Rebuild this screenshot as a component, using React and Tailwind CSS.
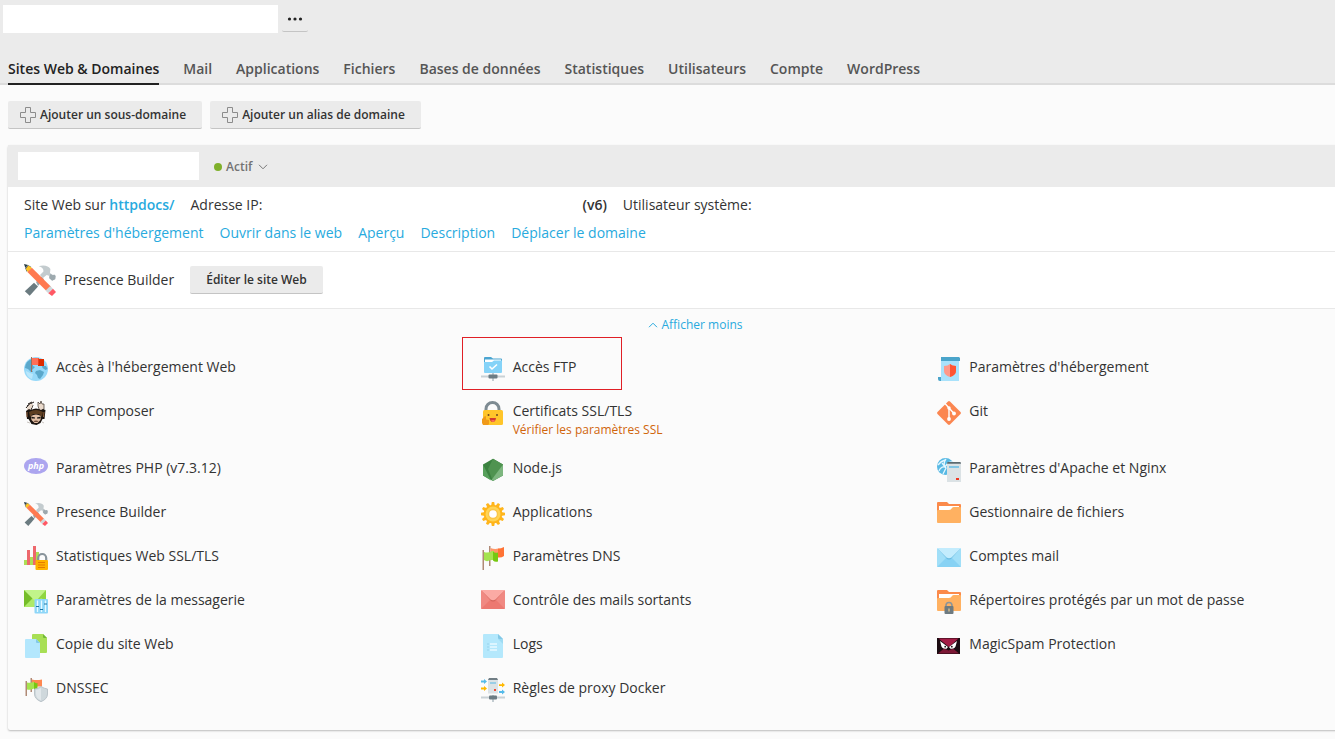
import React from "react";

function Svg({ size = 24, children }) {
  return (
    <svg
      width={size}
      height={size}
      viewBox="0 0 24 24"
      className="shrink-0"
      aria-hidden="true"
    >
      {children}
    </svg>
  );
}

const GlobeFlag = () => (
  <Svg>
    <circle cx="12" cy="12" r="12" fill="#97d9f9" />
    <path d="M3 5q3-3 6-3v7l2 1-3 3 1 2-2 0-3-3-3-1q0-3 2-6z" fill="#5ba8cb" />
    <path d="M12 14l4-1 4 2-1 3-3 4-2-1-1-3-2-2z" fill="#5ba8cb" />
    <path d="M18 9l4 0 1.500 3-2 1-3-2z" fill="#5ba8cb" />
    <path d="M2 14l4 2 3 1-1 5C5 21 2 18 2 14z" fill="#b9e7fc" />
    <path d="M7 0h1v15H7z" fill="#a1705b" />
    <path d="M8 1h7v7H8z" fill="#ff7058" />
    <path d="M14 2h6v7h-6z" fill="#dd2c00" />
    <path d="M14 8V2l1-1v7z" fill="#f03d1b" />
  </Svg>
);

const Composer = () => (
  <Svg>
    <path d="M7 8l2-4h6l3 4z" fill="#fff" />
    <path d="M2 7q2-4 8-6M9 4L7 9M3 5l3-2M4 3l4-2" fill="none" stroke="#211a16" strokeWidth="1" />
    <path d="M3 7l3-4 3 0-1 3-3 4H3z" fill="#e9d9cb" />
    <path d="M14 5l0-4 2 2 1-3 1 3 2 0v5l-3 2-2-2z" fill="#e9d9cb" stroke="#3a302a" strokeWidth=".7" />
    <path d="M2 10l3-2 2 1q5-3 10 0l2-1 2.500 1-1 9-2 0-2 4-4 2-5-1-3-5-1.500 0z" fill="#1b1410" />
    <path d="M5 11q7-4 14 0l-1 5-3-3H9l-3 3z" fill="#5d3d20" />
    <path d="M3 11v5M20 11l-.5 5" stroke="#96613a" strokeWidth="1" />
    <path d="M7 15q5-3 10 0l-.5 4-3 3h-3l-3-3z" fill="#e3bfa5" />
    <path d="M7 15.500l4 1v1l-3 0zM17 15.500l-4 1v1l3 0z" fill="#1b1715" />
    <path d="M9.500 20q2.500-1 5 0l-1 1h-3z" fill="#6b4a38" />
    <path d="M3 21l3 1M18 21l2 1" stroke="#c9c4c0" strokeWidth="1" />
  </Svg>
);

const Php = () => (
  <Svg>
    <ellipse cx="12" cy="8" rx="12" ry="8" fill="#aca5ef" />
    <text
      x="12"
      y="10.500"
      textAnchor="middle"
      fontSize="9"
      fontWeight="700"
      fontStyle="italic"
      fontFamily="Open Sans, sans-serif"
      fill="#fff"
    >
      php
    </text>
  </Svg>
);

const Tools = ({ size = 24 }) => (
  <Svg size={size}>
    <path d="M7.500 14l3 2.800-6.200 7.100-3.700-3.500z" fill="#6b7b80" />
    <path d="M9 13.500l4-4 2 2-4.500 5z" fill="#9aa5aa" />
    <path d="M11 1.600c4-1.200 7.500-.3 8.800 2.200l-.3 3 2.200 1.500 1-.4 1 .9-.3 2.400-2.300 1.200-2.200-2-.2-1.600-1.700-.6-3 2.500-2-2.400 2.600-2.600C14.800 3.400 13.600 2.200 11 1.600z" fill="#c3cbce" />
    <path d="M19.700 7.500l2 1 1-.4 1 .9-.3 2.400-2.300 1.200-2.200-2z" fill="#9da9ae" />
    <path d="M0 0l3 .7L1 2.900z" fill="#263b43" />
    <path d="M3 .8l2.500 1.400L2 5.800.8 3z" fill="#536066" />
    <path d="M3.300 1.200L6 3 3 6.200 1.300 3.700z" fill="#ffc522" />
    <path d="M5.900 2.800L20.300 17l-3.300 3.400L2.600 6z" fill="#ff7950" />
    <path d="M19.700 16.500l2 2-3.500 3.400-2-2z" fill="#cfd8dc" />
    <path d="M21.700 18.500L24 21l-3 3-2.800-2.100z" fill="#ff5864" />
  </Svg>
);

const Padlock = () => (
  <g>
    <path d="M14.200 16v-4a4 4 0 018 0v4" fill="none" stroke="#89949b" strokeWidth="2.200" />
    <rect x="11.500" y="14" width="12.500" height="10" rx="1" fill="#ffb300" />
    <path d="M14 16.500h7M14 19h7M14 21.500h7" stroke="#e57a00" strokeWidth="1" />
  </g>
);

const StatsLock = () => (
  <Svg>
    <path d="M0 14h3v5H0zM6 11h3v8H6zM12 6h3v13h-3z" fill="#acdf55" />
    <path d="M3 4h3v15H3zM9 0h3v19H9z" fill="#ed686c" />
    <Padlock />
  </Svg>
);

const GreenMail = () => (
  <Svg>
    <path d="M0 0h22v17H0z" fill="#8fd641" />
    <path d="M0 0v17L9 8z" fill="#75bd28" />
    <path d="M0 17l9-9 4 4 4-4 5 3v6z" fill="#aeea68" />
    <path d="M0 0h22L13 10q-1 1-3 0z" fill="#c1f48a" />
    <rect x="10.500" y="9" width="13.500" height="14.500" rx="1" fill="#8ed6f8" />
    <path d="M13.500 10.500V22M17.500 10.500V22M21.500 10.500V22" stroke="#e8faff" strokeWidth="1.300" />
    <path d="M12 16.500h3M16 19.500h3M20 14h3" stroke="#1f74a3" strokeWidth="1.200" />
  </Svg>
);

const Copy = () => (
  <Svg>
    <path d="M9 0h10l4 4v14q0 1-1 1H9q-1 0-1-1V1q0-1 1-1z" fill="#a8df55" />
    <path d="M19 0v3q0 1 1 1h3z" fill="#73b938" />
    <path d="M2 5h10l4 4v14q0 1-1 1H2q-1 0-1-1V6q0-1 1-1z" fill="#b3e7fd" />
    <path d="M12 5v3q0 1 1 1h3z" fill="#81c9e8" />
  </Svg>
);

const FlagsIcon = () => (
  <Svg>
    <path d="M8 0h1.500v20H8zM1.500 4H3v20H1.500z" fill="#b08a76" />
    <path d="M9.500 2q4 1.500 8 .5v8q-4 0-8-1.500z" fill="#ff9668" />
    <path d="M17 2.500q3 0 6-1.500v9q-2.500 2-6 1.500z" fill="#ff7335" />
    <path d="M3 6q4 1.500 8-1h2v9q-4-.5-6 1-2 .5-4-1z" fill="#a5e34f" />
    <path d="M12 5.500q2 2 5 1v9q-3 1-5-1z" fill="#76c811" />
  </Svg>
);

const Dnssec = () => (
  <Svg>
    <path d="M1.500 3H3v15H1.500zM6.500 0h1.500v14H6.500z" fill="#b08a76" />
    <path d="M8 1.500q4 1 10 0v7H8z" fill="#ff8750" />
    <path d="M3 4.500q4 1 7-1v7q-3.500 2-7 1z" fill="#a5e34f" />
    <path d="M10 4q1.500 1.500 3.500 1v6.500H10z" fill="#76c811" />
    <path d="M17 8.500q3 2 6.500 2.500v5q0 5-6.500 7.700Q10.500 21 10.500 16v-5q3.500-.5 6.500-2.500z" fill="#cfd8dc" stroke="#b0bac0" strokeWidth=".8" />
    <path d="M17 10v12.500q-5-2.500-5-6.500v-4q3-.5 5-2z" fill="#e1e7ea" />
  </Svg>
);

const Ftp = () => (
  <Svg>
    <path d="M12 15v9" stroke="#c3ccd1" strokeWidth="2" />
    <path d="M0 19.500h24" stroke="#c9d1d5" strokeWidth="2" />
    <rect x="7.500" y="17.500" width="9" height="4" rx="1" fill="#6c7c84" />
    <path d="M3 1q0-1 1-1h6l2 1.500h8q1 0 1 1V6H3z" fill="#4ba5d1" />
    <path d="M4 2.500h16V6H4z" fill="#fff" />
    <path d="M3 5h8l2-1.500h8V15q0 1-1 1H4q-1 0-1-1z" fill="#85d3f8" />
    <path d="M8.500 9.500l2.500 2.500 5-4.500" fill="none" stroke="#fff" strokeWidth="1.600" />
  </Svg>
);

const HappyLock = () => (
  <Svg>
    <path d="M5 11V8a6.500 6.500 0 0113 0v3" fill="none" stroke="#7e8b92" strokeWidth="3" />
    <rect x="2" y="9" width="20" height="15" rx="1.500" fill="#ffc52a" />
    <circle cx="7.500" cy="14" r="1" fill="#704822" />
    <circle cx="16" cy="14" r="1" fill="#704822" />
    <path d="M8.500 17h6.500q-.5 4-3.200 4t-3.300-4z" fill="#d03a2e" />
    <path d="M10 19.300q2-.8 4 0-1 1.700-2 1.700t-2-1.700z" fill="#ff725d" />
    <path d="M1 18l3-3 1 .5v3l3 .5v4l-1 1H2l-1-2z" fill="#f09a19" />
  </Svg>
);

const NodeJs = () => (
  <Svg>
    <path d="M12 .8l10 5.700v11L12 23 2 17.500v-11z" fill="#3b8240" />
    <path d="M12 .8l10 5.700L12 23l-5-12z" fill="#4f9350" />
    <path d="M2 6.500l8 16-8-5z" fill="#57a05b" />
    <path d="M22 6.500v11L12 23l-1.500-1z" fill="#7db67f" />
  </Svg>
);

const Gear = () => (
  <Svg>
    {[0, 30, 60, 90, 120, 150, 180, 210, 240, 270, 300, 330].map((a) => (
      <path key={a} d="M10.800 0h2.400l.7 4h-3.800z" fill="#ffb51b" transform={`rotate(${a} 12 12)`} />
    ))}
    <circle cx="12" cy="12" r="9.300" fill="#ffb51b" />
    <circle cx="12" cy="12" r="7.500" fill="#ffd454" />
    <circle cx="12" cy="12" r="5.200" fill="#fbc648" />
    <circle cx="12" cy="12" r="3.800" fill="#fff" />
  </Svg>
);

function Envelope({ body, side, flap, line, top }) {
  return (
    <Svg>
      <g transform={`translate(0 ${top})`}>
        <rect width="24" height="19" rx="1" fill={side} />
        <path d="M0 19l9-9h6l9 9z" fill={body} />
        <path d="M1 1l9 10q2 1 4 0l9-10z" fill={line} />
        <path d="M0 0h24l-9.500 9.500q-2.500 1.500-5 0z" fill={flap} />
      </g>
    </Svg>
  );
}

const RedMail = () => (
  <Envelope body="#ec7971" side="#f08982" flap="#fbaaa4" line="#d6665d" top={0} />
);
const BlueMail = () => (
  <Envelope body="#87d2f4" side="#a1dff8" flap="#c3ecfd" line="#6abce1" top={2} />
);

const Logs = () => (
  <Svg>
    <path d="M3 0h14l5 5v18q0 1-1 1H3q-1 0-1-1V1q0-1 1-1z" fill="#b4e8fc" />
    <path d="M17 0v4q0 1 1 1h4z" fill="#83c8e6" />
    <path d="M17 5h5v5z" fill="#9edbf3" />
    <path d="M9 10h7M9 13h7M9 16h7" stroke="#e9f9ff" strokeWidth="1.400" />
    <path d="M7 9.500v7" stroke="#79bdd9" strokeWidth="1" strokeDasharray="1 2" />
  </Svg>
);

const Docker = () => (
  <Svg>
    <path d="M12 17v7" stroke="#c3ccd1" strokeWidth="2" />
    <path d="M0 19.500h24" stroke="#c9d1d5" strokeWidth="2" />
    <rect x="8" y="17.500" width="8" height="4" rx="1" fill="#6c7c84" />
    <rect x="7" y="1" width="10" height="14.500" fill="#dce3e6" />
    <path d="M8 0h8l1 2H7z" fill="#717e85" />
    <path d="M9 5h6" stroke="#7cc5e6" strokeWidth="1.400" />
    <rect x="13" y="11" width="2" height="2" fill="#f04b32" />
    <path d="M0 2.500h3V1l3 2.500L3 6V4.500H0zM18 13h3v-1.500l3 2.500-3 2.500V15h-3z" fill="#55bbea" />
    <path d="M0 9.500h3V8l3 2.500L3 13v-1.500H0zM18 6.200h3V4.500L24 7l-3 2.500V8h-3z" fill="#ffb900" />
  </Svg>
);

const Hosting = () => (
  <Svg>
    <path d="M4 3h18v21H4z" fill="#a9e2fb" />
    <path d="M4 0h18l1 1v3H4z" fill="#4aa4ca" />
    <path d="M1 20v2q0 2 2 2h1v-4z" fill="#4aa4ca" />
    <path d="M13 7q2 1.800 6 2v5q0 4-6 6-6-2-6-6V9q4-.2 6-2z" fill="#ff9989" />
    <path d="M13 7q2 1.800 6 2v5q0 4-6 6z" fill="#ff5431" />
  </Svg>
);

const Git = () => (
  <Svg>
    <path d="M11 .5q1-.8 2 0L23.500 11q.8 1 0 2L13 23.500q-1 .8-2 0L.5 13q-.8-1 0-2z" fill="#fb8650" />
    <path d="M8 2.500l4 4.500v11M12 7l5 5.500" fill="none" stroke="#fff" strokeWidth="1.400" />
    <circle cx="12" cy="7" r="1.700" fill="#fff" />
    <circle cx="12" cy="18" r="1.900" fill="#fff" />
    <circle cx="17" cy="12.500" r="1.900" fill="#fff" />
  </Svg>
);

const ApacheNginx = () => (
  <Svg>
    <circle cx="8.500" cy="8.500" r="8.500" fill="#58b9e4" />
    <path d="M1 7q3-4 7-5M8 9q-2-4 1-8M8 9q3-5 7-5M2 13q2-5 6-4M5 5l4 5-3 6" fill="none" stroke="#e4f7ff" strokeWidth="1.300" />
    <rect x="10" y="5" width="14" height="19" fill="#dbe2e5" />
    <path d="M10.500 4h13l.5 1.800H10z" fill="#5d6a70" />
    <path d="M12 9h10" stroke="#6cc0e6" strokeWidth="1.600" />
    <rect x="19" y="20" width="3" height="2" fill="#ed3824" />
  </Svg>
);

const FolderShape = () => (
  <g>
    <path d="M0 1q0-1 1-1h9l2 2h11q1 0 1 1v9H0z" fill="#fb8a4a" />
    <path d="M2 4h20v7H2z" fill="#fff" />
    <path d="M0 9q0-1 1-1h11q2 0 3-2 .5-1 2-1h6q1 0 1 1v14q0 1-1 1H1q-1 0-1-1z" fill="#ffb161" />
  </g>
);

const Folder = () => (
  <Svg>
    <FolderShape />
  </Svg>
);

const FolderLock = () => (
  <Svg>
    <FolderShape />
    <path d="M9 17v-1.500a3 3 0 016 0V17" fill="none" stroke="#8b9499" strokeWidth="1.600" />
    <rect x="7.500" y="16" width="9" height="8" rx="1" fill="#6e7a80" />
    <path d="M12 18.500v3" stroke="#d9c08e" strokeWidth="1.400" />
  </Svg>
);

const MagicSpam = () => (
  <Svg>
    <rect y="4" width="23" height="16" fill="#1c0c12" />
    <path d="M1.500 4.500h20L12 13z" fill="#a31c45" />
    <path d="M1 19.500l6-5 4.500 2 4.500-2 6 5z" fill="#7c1735" />
    <path d="M3 7l8 6-1.500 1.700q-5 .5-5.500-4zM20 7l-8 6 1.500 1.700q5 .5 5.500-4z" fill="#fff" />
    <circle cx="8.200" cy="12.700" r=".9" fill="#221015" />
    <circle cx="14.800" cy="12.700" r=".9" fill="#221015" />
  </Svg>
);

const tabs = [
  "Sites Web & Domaines",
  "Mail",
  "Applications",
  "Fichiers",
  "Bases de données",
  "Statistiques",
  "Utilisateurs",
  "Compte",
  "WordPress",
];

const links = [
  "Paramètres d'hébergement",
  "Ouvrir dans le web",
  "Aperçu",
  "Description",
  "Déplacer le domaine",
];

const tools = [
  { icon: GlobeFlag, label: "Accès à l'hébergement Web" },
  { icon: Ftp, label: "Accès FTP", highlighted: true },
  { icon: Hosting, label: "Paramètres d'hébergement" },
  { icon: Composer, label: "PHP Composer" },
  { icon: HappyLock, label: "Certificats SSL/TLS", note: "Vérifier les paramètres SSL" },
  { icon: Git, label: "Git" },
  { icon: Php, label: "Paramètres PHP (v7.3.12)" },
  { icon: NodeJs, label: "Node.js" },
  { icon: ApacheNginx, label: "Paramètres d'Apache et Nginx" },
  { icon: Tools, label: "Presence Builder" },
  { icon: Gear, label: "Applications" },
  { icon: Folder, label: "Gestionnaire de fichiers" },
  { icon: StatsLock, label: "Statistiques Web SSL/TLS" },
  { icon: FlagsIcon, label: "Paramètres DNS" },
  { icon: BlueMail, label: "Comptes mail" },
  { icon: GreenMail, label: "Paramètres de la messagerie" },
  { icon: RedMail, label: "Contrôle des mails sortants" },
  { icon: FolderLock, label: "Répertoires protégés par un mot de passe" },
  { icon: Copy, label: "Copie du site Web" },
  { icon: Logs, label: "Logs" },
  { icon: MagicSpam, label: "MagicSpam Protection" },
  { icon: Dnssec, label: "DNSSEC" },
  { icon: Docker, label: "Règles de proxy Docker" },
];

function AddButton({ children }) {
  return (
    <button
      type="button"
      className="flex h-7 items-center gap-1 rounded-xs border-b border-[#c4c4c4] bg-[#ebebeb] pr-4 pl-3 text-xs font-semibold text-[#333]"
    >
      <svg width="16" height="16" viewBox="0 0 16 16" fill="none" stroke="#8c8c8c" aria-hidden="true">
        <path d="M5.500.5h5v5h5v5h-5v5h-5v-5h-5v-5h5z" />
      </svg>
      {children}
    </button>
  );
}

function Tool({ icon: Icon, label, note, highlighted }) {
  return (
    <li className="relative flex items-start gap-2">
      {highlighted && (
        <span className="pointer-events-none absolute -top-5 -left-[19px] h-[53px] w-40 border border-[#e01f26]" />
      )}
      <Icon />
      <div>
        <a href="#" className="block leading-5">
          {label}
        </a>
        {note && <p className="pt-px text-xs leading-4 text-[#d0650b]">{note}</p>}
      </div>
    </li>
  );
}

export default function App() {
  return (
    <div className="min-h-screen overflow-x-hidden bg-[#fbfbfb] font-['Open_Sans',sans-serif] text-sm text-[#333]">
      <header className="border-b-2 border-[#dcdcdc] bg-[#ebebeb] pt-[5px]">
        <div className="flex items-start gap-1 pl-[3px]">
          <div className="h-7 w-[275px] bg-white" />
          <button
            type="button"
            aria-label="Plus"
            className="flex h-[27px] w-[26px] items-center justify-center rounded-xs border-b border-[#c4c4c4] pt-0.5"
          >
            <svg width="16" height="4" viewBox="0 0 16 4" fill="#222" aria-hidden="true">
              <circle cx="2.500" cy="2" r="1.600" />
              <circle cx="8" cy="2" r="1.600" />
              <circle cx="13.500" cy="2" r="1.600" />
            </svg>
          </button>
        </div>
        <nav className="-mb-0.5 flex gap-6 px-2 pt-[26px]">
          {tabs.map((t, i) => (
            <a
              key={t}
              href="#"
              className={
                i === 0
                  ? "border-b-2 border-[#222] pb-1 font-semibold whitespace-nowrap text-[#222]"
                  : "border-b-2 border-transparent pb-1 font-semibold whitespace-nowrap text-[#555]"
              }
            >
              {t}
            </a>
          ))}
        </nav>
      </header>

      <div className="flex gap-2 px-2 py-4">
        <AddButton>Ajouter un sous-domaine</AddButton>
        <AddButton>Ajouter un alias de domaine</AddButton>
      </div>

      <main className="-mr-[47px] ml-2 rounded-xs shadow-[0_1px_2px_rgba(0,0,0,0.25)]">
        <div className="flex items-center bg-[#ebebeb] px-2.5 py-[7px]">
          <div className="h-7 w-[181px] bg-white" />
          <button type="button" className="ml-[15px] flex items-center pt-0.5 text-xs font-semibold text-[#737373]">
            <span className="mr-1 size-2 rounded-full bg-[#7fb02b]" />
            Actif
            <svg width="10" height="6" viewBox="0 0 10 6" fill="none" stroke="#777" className="ml-1.5" aria-hidden="true">
              <path d="M1 .8l4 4 4-4" />
            </svg>
          </button>
        </div>

        <section className="flex flex-col gap-2 border-b border-[#e8e8e8] bg-white px-4 py-2">
          <div className="flex gap-4 leading-5">
            <span>
              Site Web sur{" "}
              <a href="#" className="font-semibold text-[#28aade]">
                httpdocs/
              </a>
            </span>
            <span className="w-[376px]">Adresse IP:</span>
            <span className="font-semibold">(v6)</span>
            <span>Utilisateur système:</span>
          </div>
          <div className="flex gap-4 leading-5 text-[#28aade]">
            {links.map((l) => (
              <a key={l} href="#">
                {l}
              </a>
            ))}
          </div>
        </section>

        <section className="flex items-center gap-2 border-b border-[#e8e8e8] bg-white px-4 py-3">
          <Tools size={32} />
          <span>Presence Builder</span>
          <button
            type="button"
            className="ml-2 h-7 rounded-xs border-b border-[#c4c4c4] bg-[#ebebeb] px-4 text-xs font-semibold"
          >
            Éditer le site Web
          </button>
        </section>

        <section className="px-4 pt-2 pb-7">
          <button type="button" className="mx-auto flex h-4 items-center gap-1 text-xs text-[#28aade]">
            <svg width="10" height="6" viewBox="0 0 10 6" fill="none" stroke="#28aade" aria-hidden="true">
              <path d="M1 5.200l4-4 4 4" />
            </svg>
            Afficher moins
          </button>
          <ul className="grid grid-cols-3 gap-x-7 gap-y-5 pt-6">
            {tools.map((t) => (
              <Tool key={t.label} {...t} />
            ))}
          </ul>
        </section>
      </main>
    </div>
  );
}
